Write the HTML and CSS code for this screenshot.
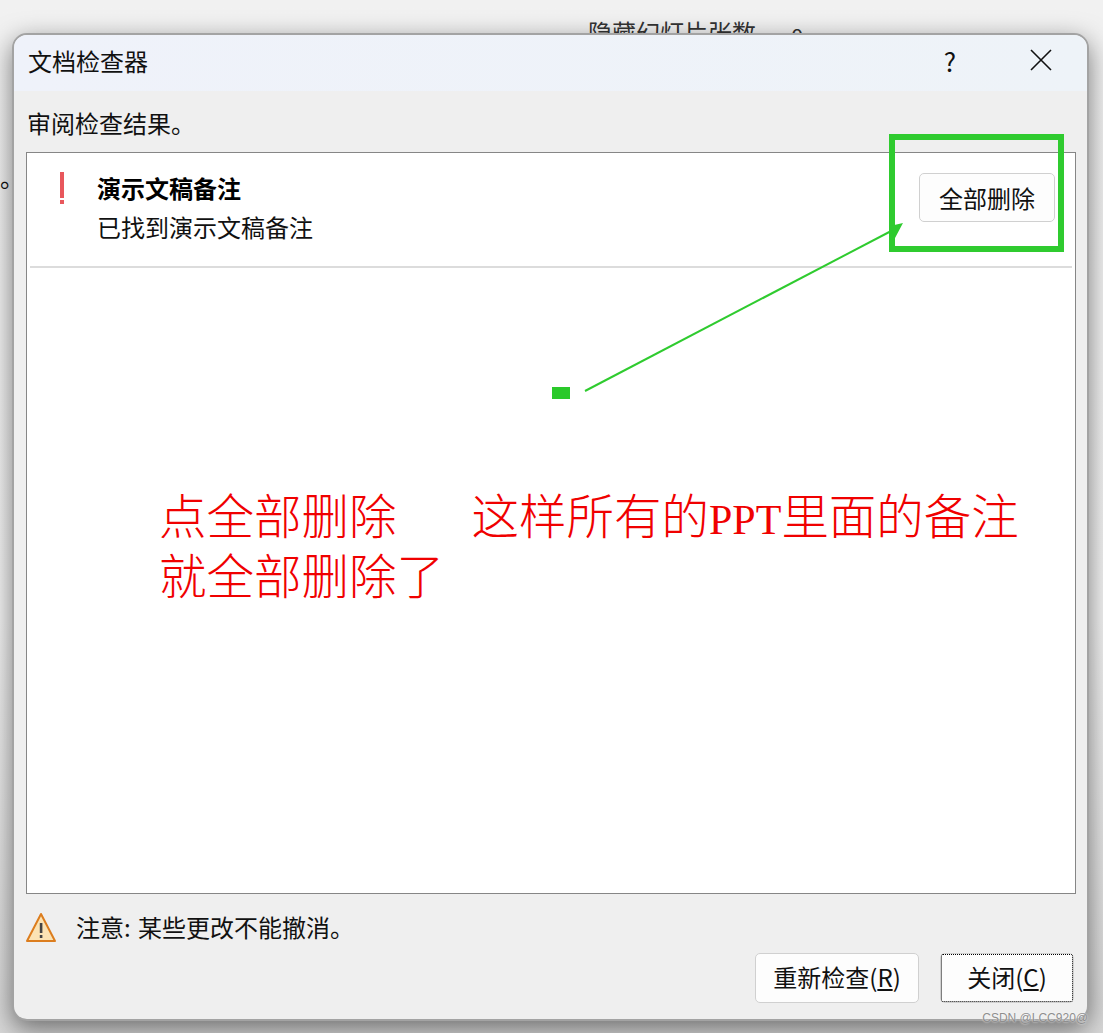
FILE: index.html
```html
<!DOCTYPE html>
<html lang="zh-CN">
<head>
    <meta charset="UTF-8">
    <meta name="viewport" content="width=device-width, initial-scale=1.0">
    <title>文档检查器</title>
    <link rel="stylesheet" href="styles.css">
</head>
<body>
    <!-- 对话框后面的幻灯片内容 -->
    <div class="behind-text">隐藏幻灯片张数</div>
    <div class="behind-num">0</div>
    <div class="behind-dot">。</div>

    <div class="dialog">
        <div class="title-bar">
            <span class="title">文档检查器</span>
            <span class="help">?</span>
            <svg class="close" width="24" height="24" viewBox="0 0 24 24">
                <path d="M2 2 L22 22 M22 2 L2 22" stroke="#111" stroke-width="1.6" fill="none"/>
            </svg>
        </div>
        <div class="dialog-body">
            <div class="hint">审阅检查结果。</div>
            <div class="result-panel">
                <div class="result-row">
                    <div class="mark"><span class="mark-line"></span><span class="mark-dot"></span></div>
                    <div class="result-text">
                        <div class="result-title">演示文稿备注</div>
                        <div class="result-sub">已找到演示文稿备注</div>
                    </div>
                    <button class="btn remove-btn">全部删除</button>
                </div>
            </div>
            <div class="notice">
                <svg width="32" height="32" viewBox="0 0 32 32">
                    <path d="M16 3 L30 30 L2 30 Z" fill="#fbe3b4" stroke="#dc7d1e" stroke-width="2" stroke-linejoin="round"/>
                    <rect x="14.8" y="12" width="2.6" height="10" fill="#444"/>
                    <rect x="14.8" y="24" width="2.6" height="3" fill="#444"/>
                </svg>
                <span>注意: 某些更改不能撤消。</span>
            </div>
            <div class="actions">
                <button class="btn recheck-btn">重新检查(<u>R</u>)</button>
                <button class="btn close-btn"><span class="focus-ring">关闭(<u>C</u>)</span></button>
            </div>
        </div>
    </div>

    <!-- 截图上的标注 -->
    <svg class="arrow" width="1103" height="1033" viewBox="0 0 1103 1033">
        <line x1="585" y1="391" x2="895" y2="229" stroke="#2fcb2f" stroke-width="2"/>
        <rect x="552" y="387" width="18" height="12" fill="#2ac92a"/>
    </svg>
    <div class="green-box"></div>
    <svg class="arrow" width="1103" height="1033" viewBox="0 0 1103 1033">
        <polygon points="903,223 890,226 895,238" fill="#2fcb2f"/>
    </svg>
    <div class="red-note">
        <div>点全部删除<span class="gap"></span>这样所有的<span class="latin">PPT</span>里面的备注</div>
        <div>就全部删除了</div>
    </div>
    <div class="watermark">CSDN @LCC920@</div>
</body>
</html>
```

FILE: styles.css
```css
html, body {
    margin: 0;
    height: 1033px;
    overflow: hidden;
}
body {
    position: relative;
    font-family: "Noto Sans CJK SC", "Liberation Sans", sans-serif;
    background: linear-gradient(#f1f1f1, #f3f3f3 60%, #d8d8d8);
    color: #111;
}
.behind-text {
    position: absolute;
    left: 588px;
    top: 16px;
    font-size: 24px;
    line-height: 32px;
    color: #333;
}
.behind-num {
    position: absolute;
    left: 791px;
    top: 20px;
    font-size: 22px;
    line-height: 30px;
    color: #333;
}
.behind-dot {
    position: absolute;
    left: 0;
    top: 161px;
    font-size: 24px;
    line-height: 32px;
}
.dialog {
    position: absolute;
    left: 12px;
    top: 33px;
    width: 1077px;
    height: 988px;
    box-sizing: border-box;
    border: 2px solid #a3a3a3;
    border-radius: 15px;
    background: #efefef;
    box-shadow: 0 8px 26px rgba(0,0,0,0.5);
    overflow: hidden;
}
.title-bar {
    display: flex;
    align-items: center;
    height: 56px;
    box-sizing: border-box;
    padding: 0 34px 6px 14px;
    background: linear-gradient(90deg, #eff2fa, #eef3f8);
}
.title {
    flex: 1;
    font-size: 24px;
}
.help {
    font-size: 26px;
    margin-right: 73px;
}
.dialog-body {
    padding: 14px 11px 0 12px;
}
.hint {
    font-size: 24px;
    line-height: 36px;
    height: 47px;
    padding-left: 1px;
}
.result-panel {
    height: 742px;
    box-sizing: border-box;
    border: 1px solid #868686;
    background: white;
    padding: 0 3px;
}
.result-row {
    display: flex;
    align-items: flex-start;
    height: 113px;
    border-bottom: 2px solid #dcdcdc;
}
.mark {
    width: 67px;
    padding-top: 19px;
    padding-left: 30px;
    box-sizing: border-box;
    display: flex;
    flex-direction: column;
}
.mark-line {
    width: 4px;
    height: 26px;
    background: #e8575c;
}
.mark-dot {
    width: 4px;
    height: 4px;
    margin-top: 2px;
    background: #e8575c;
}
.result-text {
    flex: 1;
    padding-top: 15px;
    font-size: 24px;
    line-height: 39px;
}
.result-title {
    font-weight: bold;
    color: #000;
}
.btn {
    font-family: inherit;
    font-size: 24px;
    color: #111;
    background: #fdfdfd;
    border: 1px solid #d0d0d0;
    border-radius: 5px;
    padding: 0;
}
.remove-btn {
    width: 136px;
    height: 49px;
    margin: 20px 17px 0 0;
}
.notice {
    display: flex;
    align-items: center;
    gap: 20px;
    height: 32px;
    margin-top: 17px;
    font-size: 24px;
    word-spacing: 2px;
}
.notice span {
    position: relative;
    top: -1px;
}
.notice svg {
    flex-shrink: 0;
    margin-left: -1px;
    margin-right: -1px;
}
.actions {
    display: flex;
    justify-content: flex-end;
    gap: 21px;
    margin-top: 10px;
    padding-right: 2px;
}
.recheck-btn {
    width: 164px;
    height: 50px;
    padding-bottom: 3px;
}
.close-btn {
    width: 134px;
    height: 50px;
}
.focus-ring {
    display: flex;
    align-items: center;
    justify-content: center;
    height: 100%;
    box-sizing: border-box;
    padding-bottom: 3px;
    border: 1px dotted #000;
    border-radius: 2px;
}
.arrow {
    position: absolute;
    left: 0;
    top: 0;
}
.green-box {
    position: absolute;
    left: 889px;
    top: 134px;
    width: 175px;
    height: 118px;
    box-sizing: border-box;
    border: 6px solid #2fcb2f;
}
.red-note {
    position: absolute;
    left: 159px;
    top: 484px;
    font-size: 47.5px;
    line-height: 60px;
    font-weight: 300;
    color: #f00000;
    white-space: nowrap;
}
.gap {
    display: inline-block;
    width: 75px;
}
.latin {
    font-family: "Liberation Serif", serif;
    font-size: 42px;
    font-weight: normal;
    line-height: 0;
}
.watermark {
    position: absolute;
    right: 15px;
    top: 1010px;
    font-family: "Liberation Sans", sans-serif;
    font-size: 12px;
    line-height: 16px;
    color: #8e8e8e;
    text-shadow: 0 0 2px #fff;
}
```
